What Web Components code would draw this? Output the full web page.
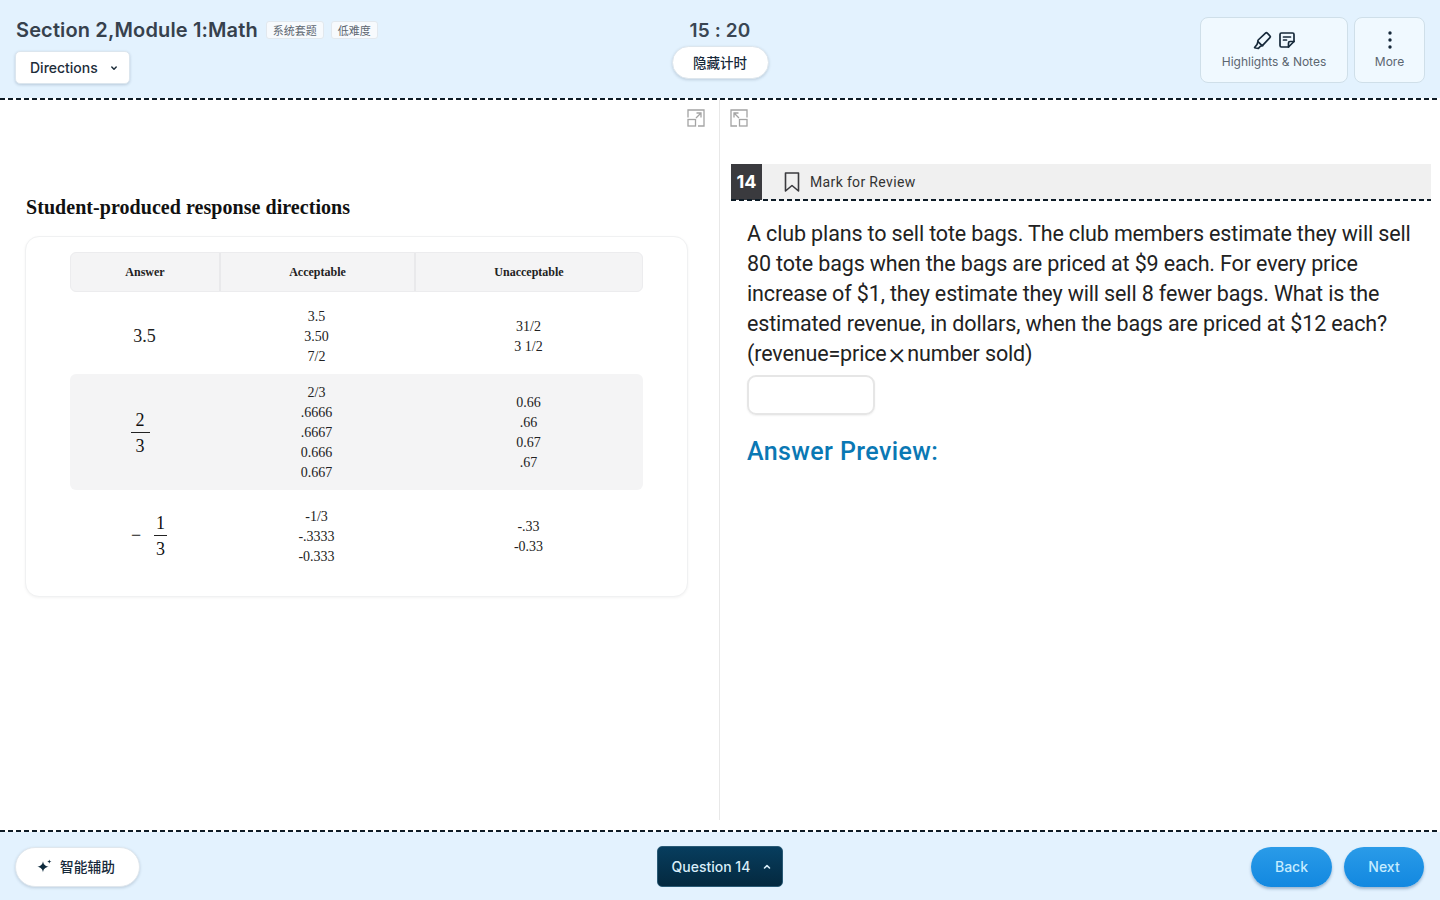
<!DOCTYPE html>
<html lang="en">
<head>
<meta charset="utf-8">
<title>Section 2, Module 1: Math</title>
<style>
  html, body { margin: 0; padding: 0; height: 100%; background: #fff; }
  body { font-family: Inter, "Noto Sans CJK SC", sans-serif; overflow: hidden; }
  exam-app { height: 900px; }
</style>
</head>
<body>
<exam-app></exam-app>
<script>
const CJK = '"Noto Sans CJK SC"';

class DashedRule extends HTMLElement {
    constructor() {
        super();
        this.attachShadow({ mode: 'open' }).innerHTML = `
        <style>
          :host {
              display: block;
              flex: none;
              height: 2px;
              background: repeating-linear-gradient(90deg, #0d1b26 0 5px, transparent 5px 8px);
          }
        </style>`;
    }
}

class TagChip extends HTMLElement {
    constructor() {
        super();
        this.attachShadow({ mode: 'open' }).innerHTML = `
        <style>
          :host {
              display: inline-flex;
              align-items: center;
              justify-content: center;
              box-sizing: border-box;
              height: 18px;
              padding: 0 6px 1px;
              background: #f7fafd;
              border: 1px solid #e2e8ee;
              border-radius: 3px;
              font: 11px ${CJK}, sans-serif;
              color: #5d6670;
          }
        </style>
        <slot></slot>`;
    }
}

class ToolButton extends HTMLElement {
    constructor() {
        super();
        this.attachShadow({ mode: 'open' }).innerHTML = `
        <style>
          :host {
              display: flex;
              flex-direction: column;
              align-items: center;
              justify-content: flex-start;
              box-sizing: border-box;
              height: 66px;
              padding-top: 12px;
              background: #f0f9ff;
              border: 1px solid #cfdfe9;
              border-radius: 8px;
              color: #5c6670;
              font: 12px/16px Inter, sans-serif;
          }
          .icons { display: flex; gap: 7px; height: 20px; align-items: center; margin-bottom: 4px; }
        </style>
        <div class="icons"><slot name="icon"></slot></div>
        <slot></slot>`;
    }
}

class ExamHeader extends HTMLElement {
    constructor() {
        super();
        this.attachShadow({ mode: 'open' }).innerHTML = `
        <style>
          :host {
              display: grid;
              flex: none;
              grid-template-columns: 1fr auto 1fr;
              box-sizing: border-box;
              height: 98px;
              padding: 17px 15px 0 15px;
              background: #e3f2fe;
          }
          .left { display: flex; flex-direction: column; align-items: flex-start; }
          .title-row { display: flex; align-items: center; height: 26px; margin-left: 1px; }
          h1 {
              margin: 0 8px 0 0;
              font: 600 20px Inter, sans-serif;
              letter-spacing: .14px;
              color: #36414d;
              white-space: nowrap;
          }
          tag-chip + tag-chip { margin-left: 7px; }
          .directions {
              display: flex;
              align-items: center;
              box-sizing: border-box;
              width: 115px;
              height: 33px;
              margin-top: 8px;
              padding-left: 14px;
              background: #fff;
              border: 1px solid #dce6ee;
              border-radius: 5px;
              box-shadow: 0 1px 3px rgba(20, 50, 80, .2);
              font: 500 14px Inter, sans-serif;
              color: #1d2d3a;
          }
          .directions svg { margin-left: 11px; }
          .center { display: flex; flex-direction: column; align-items: center; }
          .time { padding-top: 1px; height: 26px; font: 600 19px/26px Inter, sans-serif; letter-spacing: .15px; color: #3a4653; }
          .hide-timer {
              display: flex;
              align-items: center;
              justify-content: center;
              box-sizing: border-box;
              width: 97px;
              height: 33px;
              margin-top: 2px;
              padding-bottom: 2px;
              background: #fff;
              border: 1px solid #dde6ed;
              border-radius: 17px;
              box-shadow: 0 1px 3px rgba(20, 50, 80, .18);
              font: 500 13.5px ${CJK}, sans-serif;
              color: #16293a;
          }
          .right { display: flex; justify-content: flex-end; gap: 6px; }
          .hl { width: 148px; }
          .more { width: 71px; }
          svg { display: block; }
        </style>
        <div class="left">
          <div class="title-row">
            <h1>Section 2,Module 1:Math</h1>
            <tag-chip>系统套题</tag-chip>
            <tag-chip>低难度</tag-chip>
          </div>
          <div class="directions">Directions
            <svg width="10" height="10" viewBox="0 0 10 10" fill="none" stroke="#1d2d3a" stroke-width="1.5" stroke-linecap="round" stroke-linejoin="round"><path d="M2.800 4l2.200 2.200L7.200 4"/></svg>
          </div>
        </div>
        <div class="center">
          <div class="time">15 : 20</div>
          <div class="hide-timer">隐藏计时</div>
        </div>
        <div class="right">
          <tool-button class="hl">
            <svg slot="icon" width="19" height="19" viewBox="0 0 19 19" fill="none" stroke="#16293a" stroke-width="1.7" stroke-linejoin="round" stroke-linecap="round"><path d="M12.500 2.200a1.300 1.300 0 0 1 1.800 0l2.600 2.600a1.300 1.300 0 0 1 0 1.800l-6.800 7.200a1.300 1.300 0 0 1-1.800 0L5.200 10.800a1.300 1.300 0 0 1 0-1.800z"/><path d="M5 10.500l-1 3-2.400 3.100 3.800.8 2-2.200 2.300-.6"/></svg>
            <svg slot="icon" width="16" height="16" viewBox="0 0 16 16" fill="none" stroke="#16293a" stroke-width="1.7" stroke-linejoin="round" stroke-linecap="round"><path d="M9.500 15H2.400A1.400 1.400 0 0 1 1 13.600V2.400A1.400 1.400 0 0 1 2.400 1h11.200A1.400 1.400 0 0 1 15 2.400v7.100z"/><path d="M9.500 15v-4a1.500 1.500 0 0 1 1.500-1.500h4"/><path d="M4.500 5h7M4.500 8h3"/></svg>
            Highlights &amp; Notes
          </tool-button>
          <tool-button class="more">
            <svg slot="icon" width="6" height="20" viewBox="0 0 6 20" fill="#16293a"><circle cx="3" cy="3" r="1.700"/><circle cx="3" cy="10" r="1.700"/><circle cx="3" cy="17" r="1.700"/></svg>
            More
          </tool-button>
        </div>`;
    }
}

class MathFraction extends HTMLElement {
    constructor() {
        super();
        this.attachShadow({ mode: 'open' }).innerHTML = `
        <style>
          :host {
              display: inline-flex;
              flex-direction: column;
              align-items: center;
              font: 18px/22px "Liberation Serif", serif;
              color: #111;
          }
          .top { padding: 0 var(--frac-pad, 3px); border-bottom: 1px solid #222; width: 13px; text-align: center; height: 24px; line-height: 25px; }
          .bottom { height: 24px; line-height: 26px; }
        </style>
        <div class="top"><slot name="top"></slot></div>
        <div class="bottom"><slot name="bottom"></slot></div>`;
    }
}

class AnswerRow extends HTMLElement {
    constructor() {
        super();
        this.attachShadow({ mode: 'open' }).innerHTML = `
        <style>
          :host {
              display: grid;
              box-sizing: border-box;
              grid-template-columns: 149px 195px 229px;
              align-items: center;
              text-align: center;
              font: 14px/20px "Liberation Serif", serif;
              color: #222;
          }
          :host([shaded]) { background: #f4f4f5; border-radius: 6px; }
          .answer { font-size: 18px; display: flex; justify-content: center; align-items: center; }
          .cell { padding-top: 2px; }
          ::slotted([slot="answer"]) { display: flex; align-items: center; }
        </style>
        <div class="answer"><slot name="answer"></slot></div>
        <div class="cell"><slot name="ok"></slot></div>
        <div class="cell"><slot name="bad"></slot></div>`;
    }
}

class AnswerTable extends HTMLElement {
    constructor() {
        super();
        this.attachShadow({ mode: 'open' }).innerHTML = `
        <style>
          :host {
              display: block;
              box-sizing: border-box;
              width: 663px;
              height: 361px;
              padding: 15px 44px;
              border: 1px solid #f0f1f2;
              border-radius: 14px;
              box-shadow: 0 1px 3px rgba(0, 0, 0, .05);
              background: #fff;
          }
          .head {
              display: grid;
              grid-template-columns: 148px 195px 228px;
              height: 40px;
              background: #f4f4f5;
              border: 1px solid #ececee;
              box-sizing: border-box;
              border-radius: 6px;
              font: 700 12px/38px "Liberation Serif", serif;
              color: #222;
              text-align: center;
          }
          .head div + div { border-left: 2px solid #e9e9eb; }
          ::slotted(answer-row:nth-of-type(1)) { height: 82px; padding-top: 6px; }
          ::slotted(answer-row:nth-of-type(2)) { height: 116px; }
          ::slotted(answer-row:nth-of-type(3)) { height: 92px; }
        </style>
        <div class="head"><div>Answer</div><div>Acceptable</div><div>Unacceptable</div></div>
        <slot></slot>`;
    }
}

class PassagePane extends HTMLElement {
    constructor() {
        super();
        this.attachShadow({ mode: 'open' }).innerHTML = `
        <style>
          :host {
              display: block;
              box-sizing: border-box;
              height: 720px;
              padding: 0 0 0 25px;
              border-right: 1px solid #e8e8e8;
          }
          .expand { display: flex; justify-content: flex-end; padding: 9px 14px 0 0; height: 19px; }
          h2 {
              margin: 0;
              padding: 67px 0 17px 1px;
              font: 700 20px/24px "Liberation Serif", serif;
              letter-spacing: .05px;
              color: #111;
          }
        </style>
        <div class="expand">
          <svg width="18" height="18" viewBox="0 0 18 18" fill="none" stroke="#a4a4a4" stroke-width="1.300"><path d="M1 8.500V1h16v16h-6"/><rect x="1" y="10.500" width="7.500" height="6.500"/><path d="M9 9l5-5M9.500 4H14v4.500"/></svg>
        </div>
        <h2>Student-produced response directions</h2>
        <answer-table>
          <answer-row>
            <span slot="answer">3.5</span>
            <div slot="ok">3.5<br>3.50<br>7/2</div>
            <div slot="bad">31/2<br>3 1/2</div>
          </answer-row>
          <answer-row shaded>
            <span slot="answer" style="margin-right:9px"><math-fraction><span slot="top">2</span><span slot="bottom">3</span></math-fraction></span>
            <div slot="ok">2/3<br>.6666<br>.6667<br>0.666<br>0.667</div>
            <div slot="bad">0.66<br>.66<br>0.67<br>.67</div>
          </answer-row>
          <answer-row>
            <span slot="answer" style="margin-left:9px;margin-bottom:2px">−<span style="width:13px"></span><math-fraction style="--frac-pad:0px"><span slot="top">1</span><span slot="bottom">3</span></math-fraction></span>
            <div slot="ok">-1/3<br>-.3333<br>-0.333</div>
            <div slot="bad">-.33<br>-0.33</div>
          </answer-row>
        </answer-table>`;
    }
}

class QuestionPane extends HTMLElement {
    constructor() {
        super();
        this.attachShadow({ mode: 'open' }).innerHTML = `
        <style>
          :host {
              display: block;
              box-sizing: border-box;
              height: 720px;
              padding: 9px 9px 0 11px;
          }
          .expand { height: 19px; margin-left: -1px; }
          .bar {
              position: relative;
              display: flex;
              align-items: center;
              height: 36px;
              margin-top: 36px;
              background: #f0f0f0;
          }
          .num {
              width: 31px;
              height: 36px;
              background: #3a3a3e;
              color: #fff;
              font: 700 18px/36px Inter, sans-serif;
              text-align: center;
          }
          .mark {
              display: flex;
              align-items: center;
              margin-left: 22px;
              font: 14px Roboto, sans-serif;
              letter-spacing: .35px;
              color: #333;
          }
          .mark svg { margin-right: 10px; }
          dashed-rule { position: absolute; left: 0; right: 0; bottom: -1px; }
          p {
              margin: 19px 0 0 16px;
              white-space: nowrap;
              font: 21.5px/30px Roboto, sans-serif;
              letter-spacing: -.14px;
              color: #222;
          }
          .times { font-size: 32px; line-height: 20px; font-weight: 300; vertical-align: -3px; margin: 0 2px; }
          .input {
              box-sizing: border-box;
              width: 128px;
              height: 40px;
              margin: 6px 0 0 16px;
              border: 2px solid #e6e6e6;
              border-radius: 9px;
              box-shadow: 0 1px 2px rgba(0, 0, 0, .06);
          }
          h3 {
              margin: 20px 0 0 16px;
              font: 500 25px/34px Roboto, sans-serif;
              letter-spacing: .4px;
              color: #0a78b4;
          }
        </style>
        <div class="expand">
          <svg width="18" height="18" viewBox="0 0 18 18" fill="none" stroke="#a4a4a4" stroke-width="1.300"><path d="M17 8.500V1H1v16h6"/><rect x="9.500" y="10.500" width="7.500" height="6.500"/><path d="M9 9L4 4M8.500 4H4v4.500"/></svg>
        </div>
        <div class="bar">
          <div class="num">14</div>
          <div class="mark">
            <svg width="16" height="20" viewBox="0 0 16 20" fill="none" stroke="#3a3a3e" stroke-width="1.600" stroke-linejoin="round"><path d="M1.500 1h13v18L8 13.500 1.500 19z"/></svg>
            Mark for Review
          </div>
          <dashed-rule></dashed-rule>
        </div>
        <p>A club plans to sell tote bags. The club members estimate they will sell<br>80 tote bags when the bags are priced at $9 each. For every price<br>increase of $1, they estimate they will sell 8 fewer bags. What is the<br>estimated revenue, in dollars, when the bags are priced at $12 each?<br>(revenue=price<span class="times">×</span>number sold)</p>
        <div class="input"></div>
        <h3>Answer Preview:</h3>`;
    }
}

class ExamFooter extends HTMLElement {
    constructor() {
        super();
        this.attachShadow({ mode: 'open' }).innerHTML = `
        <style>
          :host {
              display: grid;
              flex: none;
              grid-template-columns: 1fr auto 1fr;
              align-items: center;
              box-sizing: border-box;
              height: 68px;
              padding: 2px 16px 0 15px;
              background: #e3f2fe;
          }
          .assist {
              display: flex;
              align-items: center;
              justify-content: center;
              gap: 8px;
              box-sizing: border-box;
              width: 125px;
              height: 40px;
              padding: 0 3px 2px 0;
              background: #fff;
              border: 1px solid #e0e7ed;
              border-radius: 20px;
              box-shadow: 0 1px 3px rgba(20, 50, 80, .18);
              font: 500 13.7px ${CJK}, sans-serif;
              color: #16293a;
          }
          .question {
              display: flex;
              align-items: center;
              gap: 12px;
              box-sizing: border-box;
              width: 126px;
              height: 41px;
              margin-top: -1px;
              padding-left: 14px;
              background: linear-gradient(#073d5e, #04293f);
              border: 1px solid #2a5a75;
              border-radius: 5px;
              font: 500 14px Inter, sans-serif;
              color: #d9eef9;
          }
          .nav { display: flex; justify-content: flex-end; gap: 12px; }
          .nav div {
              display: flex;
              align-items: center;
              justify-content: center;
              box-sizing: border-box;
              width: 81px;
              height: 40px;
              padding-bottom: 2px;
              border-radius: 20px;
              background: linear-gradient(#2a9be8, #1288e0);
              box-shadow: 0 2px 3px rgba(20, 70, 120, .35);
              font: 500 14px Inter, sans-serif;
              color: #c5ecff;
          }
          .nav div + div { width: 80px; }
          svg { display: block; }
        </style>
        <div>
          <div class="assist">
            <svg width="15" height="15" viewBox="0 0 15 15" fill="#0e2a3d"><path d="M6 2.300c.5 3.200 1.800 4.600 5.700 5.500-3.900.9-5.200 2.300-5.700 5.500-.5-3.200-1.800-4.600-5.700-5.500C4.200 6.900 5.500 5.500 6 2.300z"/><path d="M12.300 .5c.2 1.300.7 1.800 2.200 2.100-1.500.3-2 .8-2.200 2.100-.2-1.300-.7-1.800-2.200-2.100 1.500-.3 2-.8 2.200-2.100z"/></svg>
            智能辅助
          </div>
        </div>
        <div class="question">Question 14
          <svg width="10" height="10" viewBox="0 0 10 10" fill="none" stroke="#d9eef9" stroke-width="1.600" stroke-linecap="round" stroke-linejoin="round"><path d="M2.500 6L5 3.600 7.500 6"/></svg>
        </div>
        <div class="nav"><div>Back</div><div>Next</div></div>`;
    }
}

class ExamApp extends HTMLElement {
    constructor() {
        super();
        this.attachShadow({ mode: 'open' }).innerHTML = `
        <style>
          :host { display: flex; flex-direction: column; }
          .main { display: grid; flex: none; grid-template-columns: 720px 720px; height: 730px; }
          .main > * { min-width: 0; }
        </style>
        <exam-header></exam-header>
        <dashed-rule></dashed-rule>
        <div class="main">
          <passage-pane></passage-pane>
          <question-pane></question-pane>
        </div>
        <dashed-rule></dashed-rule>
        <exam-footer></exam-footer>`;
    }
}

customElements.define('dashed-rule', DashedRule);
customElements.define('tag-chip', TagChip);
customElements.define('tool-button', ToolButton);
customElements.define('exam-header', ExamHeader);
customElements.define('math-fraction', MathFraction);
customElements.define('answer-row', AnswerRow);
customElements.define('answer-table', AnswerTable);
customElements.define('passage-pane', PassagePane);
customElements.define('question-pane', QuestionPane);
customElements.define('exam-footer', ExamFooter);
customElements.define('exam-app', ExamApp);
</script>
</body>
</html>
